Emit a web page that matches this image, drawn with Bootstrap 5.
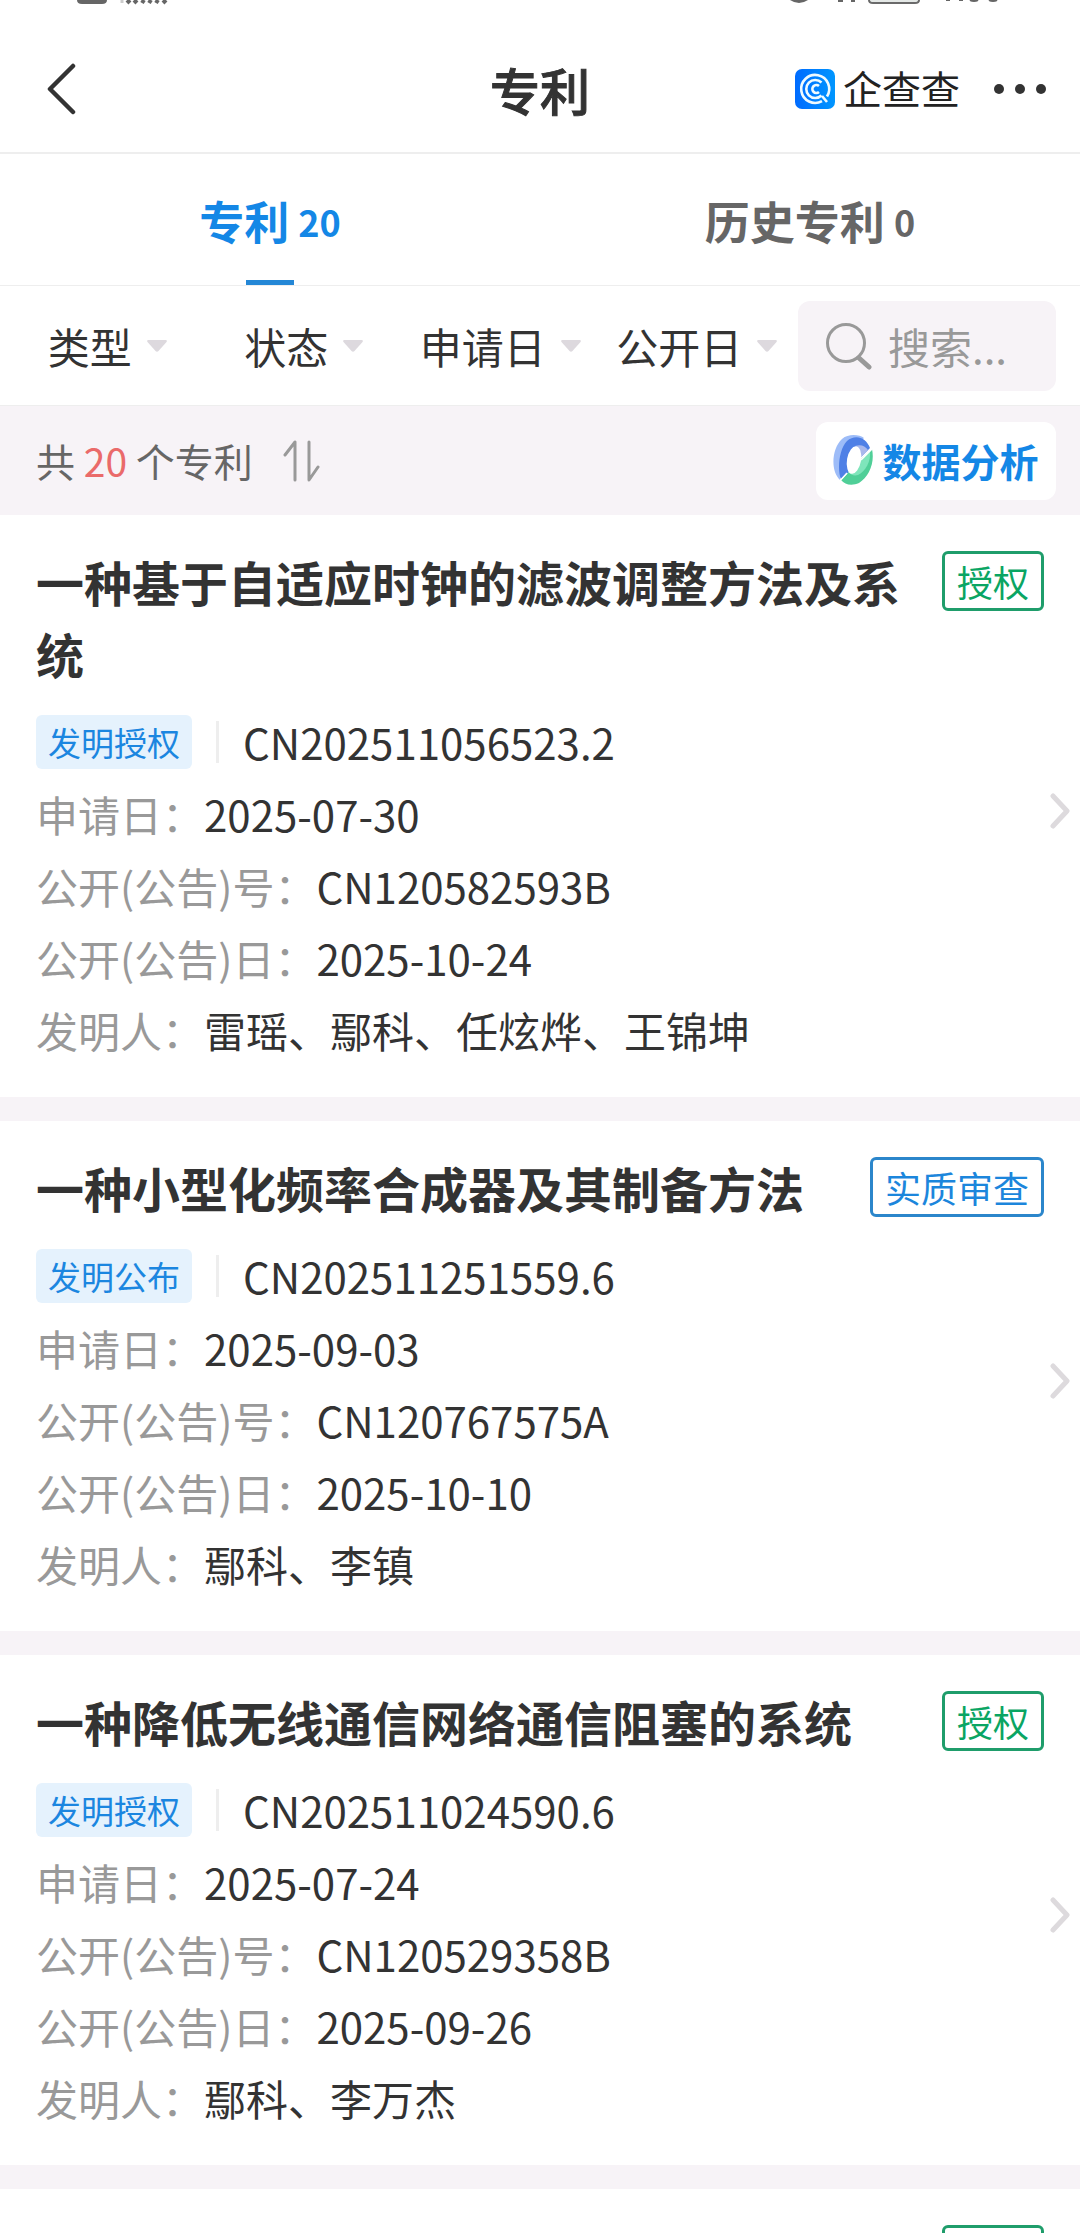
<!DOCTYPE html>
<html lang="zh-CN">
<head>
<meta charset="utf-8">
<meta name="viewport" content="width=device-width, initial-scale=1">
<title>专利</title>
<link href="https://cdn.jsdelivr.net/npm/bootstrap@5.3.0/dist/css/bootstrap.min.css" rel="stylesheet">
<style>
  :root { --ink: #333; --blue: #1487e6; --soft: #f7f3f7; --line: #eee; }
  body { font-family: "Noto Sans CJK SC", sans-serif; color: var(--ink); background: #fff; overflow-x: hidden; }
  svg { display: block; flex: none; }
  button { font-family: inherit; }
  .plain-btn { border: 0; padding: 0; background: none; color: inherit; }

  .status-strip { height: 7px; padding: 0 80px 0 77px; overflow: hidden; }

  .app-bar { height: 147px; padding: 18px 32px 0; border-bottom: 2px solid var(--line); }
  .app-bar .side { flex: 1 1 0; }
  .app-bar h1 { font-size: 50px; line-height: 72px; font-weight: 500; margin: 0; -webkit-text-stroke: 1px currentColor; }
  .back-btn { margin-left: 13px; }
  .brand-name { font-size: 39px; line-height: 48px; padding-bottom: 3px; font-weight: 400; color: #222; }

  .tab-row { height: 132px; border-bottom: 1px solid var(--line); }
  .tab-link { height: 131px; font-size: 45px; line-height: 66px; font-weight: 700; color: #666; text-decoration: none; padding-top: 2px; }
  .tab-link .tab-num { font-size: 36px; font-weight: 700; margin-left: 9px; }
  .tab-link.active { color: var(--blue); position: relative; }
  .tab-link.active::after { content: ""; position: absolute; bottom: 0; left: calc(50% - 24px); width: 48px; height: 5px; background: #2487d6; }

  .filter-row { height: 120px; padding: 0 24px 0 9px; border-bottom: 1px solid var(--line); }
  .filter-btn { flex: 1 1 0; font-size: 42px; line-height: 60px; gap: 15px; }
  .search-box { width: 258px; height: 90px; margin-left: 3px; border-radius: 12px; background: var(--soft); padding: 0 24px 0 28px; gap: 15px; }
  .search-box input { font-family: inherit; font-size: 42px; line-height: 60px; border: 0; padding: 0; min-width: 0; width: 100%; background: none; color: var(--ink); outline: 0; }
  .search-box input::placeholder { color: #999; opacity: 1; }

  .count-row { height: 109px; background: var(--soft); padding: 0 24px 0 36px; font-size: 39px; line-height: 58px; color: #666; }
  .count-row .count-text { padding-bottom: 2px; }
  .count-row .total { color: #ea6a6a; }
  .analysis-btn { height: 78px; width: 240px; border-radius: 12px; padding-bottom: 2px; background: #fff; color: var(--blue); font-weight: 700; font-size: 39px; line-height: 58px; gap: 9px; }

  .patent { color: var(--ink); text-decoration: none; padding: 30px 10px 31px 36px; gap: 6px; }
  .patent + .patent { border-top: 24px solid var(--soft); }
  .patent-title { font-size: 48px; line-height: 72px; font-weight: 700; margin: 0; }
  .patent-head { gap: 40px; margin-bottom: 17px; }
  .state-tag { flex: none; height: 60px; min-width: 102px; margin-top: 6px; border: 3px solid #1f9d6b; color: #0aa563; border-radius: 6px; padding: 0 12px; font-size: 36px; line-height: 54px; }
  .state-tag.pending { border-color: #2b86cb; color: #1c86dc; }
  .patent-line { font-size: 42px; line-height: 72px; margin: 0; }
  .patent-line .lbl { color: #999; font-weight: 400; }
  .kind-tag { height: 54px; border-radius: 6px; background: #e5f2fd; color: #1b86e0; font-size: 33px; line-height: 54px; padding: 0 12px; }
  .sep { width: 3px; height: 42px; background: #eee; margin: 0 24px; }
  .go { margin-top: 11px; }
  .page { height: 100vh; overflow: hidden; }
</style>
<script src="https://cdn.jsdelivr.net/npm/bootstrap@5.3.0/dist/js/bootstrap.bundle.min.js"></script>
</head>
<body>
<svg width="0" height="0" class="position-absolute" aria-hidden="true">
  <symbol id="caret" viewBox="0 0 20 12"><path d="M1.500 0h17c1.200 0 1.800 1 1 2l-8 9q-1.500 1.500-3 0l-8-9c-.8-1-.2-2 1-2z" fill="#ddd9de"/></symbol>
  <symbol id="chev" viewBox="0 0 20 36"><path d="M3 3l14 15L3 33" fill="none" stroke="#dddadd" stroke-width="5" stroke-linecap="round" stroke-linejoin="round"/></symbol>
</svg>
<div class="page">
  <div class="status-strip d-flex justify-content-between" aria-hidden="true">
    <svg width="92" height="6"><path d="M0 0h30q0 4-5 4H5Q0 4 0 0z" fill="#666"/><path d="M45 0v3" stroke="#ccc" stroke-width="3"/><path d="M50 3l3-3M57 3l3-3M65 3l2-3M72 3l2-3M79 3l2-3M86 3l3-3" stroke="#666" stroke-width="4"/></svg>
    <svg width="210" height="6"><path d="M0 0h18q-9 6-18 0z" fill="#666"/><path d="M48 0h5v2h-5zM61 0h4v2h-4z" fill="#666"/><path d="M79 0q0 3 4 3h42q4 0 4-3" fill="#e4e8e6" stroke="#6a6a6a" stroke-width="2"/><path d="M156 0h4M169 0h4M180 0q4 2 8 0M199 0q4 2 8 0" fill="none" stroke="#666" stroke-width="2"/></svg>
  </div>

  <header class="app-bar d-flex align-items-center">
    <div class="side d-flex align-items-center">
      <button class="plain-btn back-btn" type="button" aria-label="返回"><svg width="32" height="52" viewBox="0 0 32 52"><path d="M28 3L5 26l23 23" fill="none" stroke="#333" stroke-width="4.500" stroke-linecap="round" stroke-linejoin="round"/></svg></button>
    </div>
    <h1>专利</h1>
    <div class="side d-flex align-items-center justify-content-end">
      <svg width="40" height="40" viewBox="0 0 40 40" role="img" aria-label="logo">
        <defs><linearGradient id="lg"><stop stop-color="#006bff"/><stop offset="1" stop-color="#0096ff"/></linearGradient></defs>
        <rect width="40" height="40" rx="7" fill="url(#lg)"/>
        <g fill="none" stroke="#effaff" stroke-width="2.600">
          <path d="M32 27.500A14 14 0 1 0 27 32.200M27 27l5 6"/>
          <path d="M26.500 13.500a9 9 0 1 0 0 13"/><path d="M24 17a4 4 0 1 0 0 6"/>
        </g>
      </svg>
      <span class="brand-name ms-2">企查查</span>
      <button class="plain-btn ms-4 ps-2" type="button" aria-label="更多"><svg width="56" height="12" viewBox="0 0 56 12" fill="#333"><circle cx="7" cy="6" r="5"/><circle cx="28" cy="6" r="5"/><circle cx="49" cy="6" r="5"/></svg></button>
    </div>
  </header>

  <nav class="tab-row d-flex">
    <a href="#" class="tab-link active flex-fill w-50 d-flex align-items-center justify-content-center" aria-current="page">专利<span class="tab-num">20</span></a>
    <a href="#" class="tab-link flex-fill w-50 d-flex align-items-center justify-content-center">历史专利<span class="tab-num">0</span></a>
  </nav>

  <div class="filter-row d-flex align-items-center">
    <div class="d-flex flex-fill">
      <button type="button" class="plain-btn filter-btn d-flex align-items-center justify-content-center">类型<svg width="20" height="12"><use href="#caret"/></svg></button>
      <button type="button" class="plain-btn filter-btn d-flex align-items-center justify-content-center">状态<svg width="20" height="12"><use href="#caret"/></svg></button>
      <button type="button" class="plain-btn filter-btn d-flex align-items-center justify-content-center">申请日<svg width="20" height="12"><use href="#caret"/></svg></button>
      <button type="button" class="plain-btn filter-btn d-flex align-items-center justify-content-center">公开日<svg width="20" height="12"><use href="#caret"/></svg></button>
    </div>
    <label class="search-box d-flex align-items-center">
      <svg width="47" height="48" viewBox="0 0 47 48" fill="none" stroke="#999" stroke-linecap="round"><circle cx="20" cy="21" r="18.500" stroke-width="3"/><path d="M33 36l10 9" stroke-width="5"/></svg>
      <input type="text" placeholder="搜索..." aria-label="搜索">
    </label>
  </div>

  <div class="count-row d-flex align-items-center justify-content-between">
    <div class="d-flex align-items-center">
      <span class="count-text">共 <span class="total">20</span> 个专利</span>
      <button class="plain-btn ms-4 ps-1" type="button" aria-label="排序"><svg width="40" height="42" viewBox="0 0 40 42" fill="none" stroke="#999" stroke-width="3" stroke-linecap="round" stroke-linejoin="round"><path d="M4 15L14 2v38M28 2v38l9-13"/></svg></button>
    </div>
    <button class="plain-btn analysis-btn d-flex align-items-center justify-content-center" type="button">
      <svg width="40" height="50" viewBox="0 0 40 50">
        <path d="M7 45C-3 36-1 13 9 4c7-6 18-4 22-1L14 20z" fill="#9dbcf8"/>
        <path d="M8 44C4 35 6 14 14 6c8-7 19-4 23 7L27 23 15 38z" fill="#4f80e6"/>
        <path d="M22 11c5 0 6 6 6 11l7-7c-3-4-7-6-13-4z" fill="#a9b8ec"/>
        <path d="M39 14c3 14-3 28-13 34-7 3-14 2-18-3l8-8 14-12z" fill="#50cf98"/>
        <path d="M37 16c1 10-4 20-12 24-4 1-7 0-10-3l14-14z" fill="#7fe5bb"/>
        <ellipse cx="21" cy="25" rx="7" ry="14" transform="rotate(10 21 25)" fill="#fff"/>
        <path d="M5 48L14 38M28 25L40 13" stroke="#fff" stroke-width="1.500"/>
      </svg>数据分析
    </button>
  </div>

  <main>
    <a href="#" class="patent d-flex align-items-center">
      <div class="flex-fill">
        <div class="patent-head d-flex justify-content-between align-items-start"><h2 class="patent-title">一种基于自适应时钟的滤波调整方法及系统</h2><span class="state-tag">授权</span></div>
        <p class="patent-line d-flex align-items-center"><span class="kind-tag">发明授权</span><span class="sep"></span>CN202511056523.2</p>
        <p class="patent-line"><span class="lbl">申请日：</span>2025-07-30</p>
        <p class="patent-line"><span class="lbl">公开(公告)号：</span>CN120582593B</p>
        <p class="patent-line"><span class="lbl">公开(公告)日：</span>2025-10-24</p>
        <p class="patent-line"><span class="lbl">发明人：</span>雷瑶、鄢科、任炫烨、王锦坤</p>
      </div>
      <svg class="go" width="20" height="36"><use href="#chev"/></svg>
    </a>
    <a href="#" class="patent d-flex align-items-center">
      <div class="flex-fill">
        <div class="patent-head d-flex justify-content-between align-items-start"><h2 class="patent-title">一种小型化频率合成器及其制备方法</h2><span class="state-tag pending">实质审查</span></div>
        <p class="patent-line d-flex align-items-center"><span class="kind-tag">发明公布</span><span class="sep"></span>CN202511251559.6</p>
        <p class="patent-line"><span class="lbl">申请日：</span>2025-09-03</p>
        <p class="patent-line"><span class="lbl">公开(公告)号：</span>CN120767575A</p>
        <p class="patent-line"><span class="lbl">公开(公告)日：</span>2025-10-10</p>
        <p class="patent-line"><span class="lbl">发明人：</span>鄢科、李镇</p>
      </div>
      <svg class="go" width="20" height="36"><use href="#chev"/></svg>
    </a>
    <a href="#" class="patent d-flex align-items-center">
      <div class="flex-fill">
        <div class="patent-head d-flex justify-content-between align-items-start"><h2 class="patent-title">一种降低无线通信网络通信阻塞的系统</h2><span class="state-tag">授权</span></div>
        <p class="patent-line d-flex align-items-center"><span class="kind-tag">发明授权</span><span class="sep"></span>CN202511024590.6</p>
        <p class="patent-line"><span class="lbl">申请日：</span>2025-07-24</p>
        <p class="patent-line"><span class="lbl">公开(公告)号：</span>CN120529358B</p>
        <p class="patent-line"><span class="lbl">公开(公告)日：</span>2025-09-26</p>
        <p class="patent-line"><span class="lbl">发明人：</span>鄢科、李万杰</p>
      </div>
      <svg class="go" width="20" height="36"><use href="#chev"/></svg>
    </a>
    <div class="patent d-flex align-items-center">
      <div class="flex-fill">
        <div class="patent-head d-flex justify-content-end"><span class="state-tag"></span></div>
      </div>
      <svg class="go" width="20" height="36"></svg>
    </div>
  </main>
</div>
</body>
</html>
